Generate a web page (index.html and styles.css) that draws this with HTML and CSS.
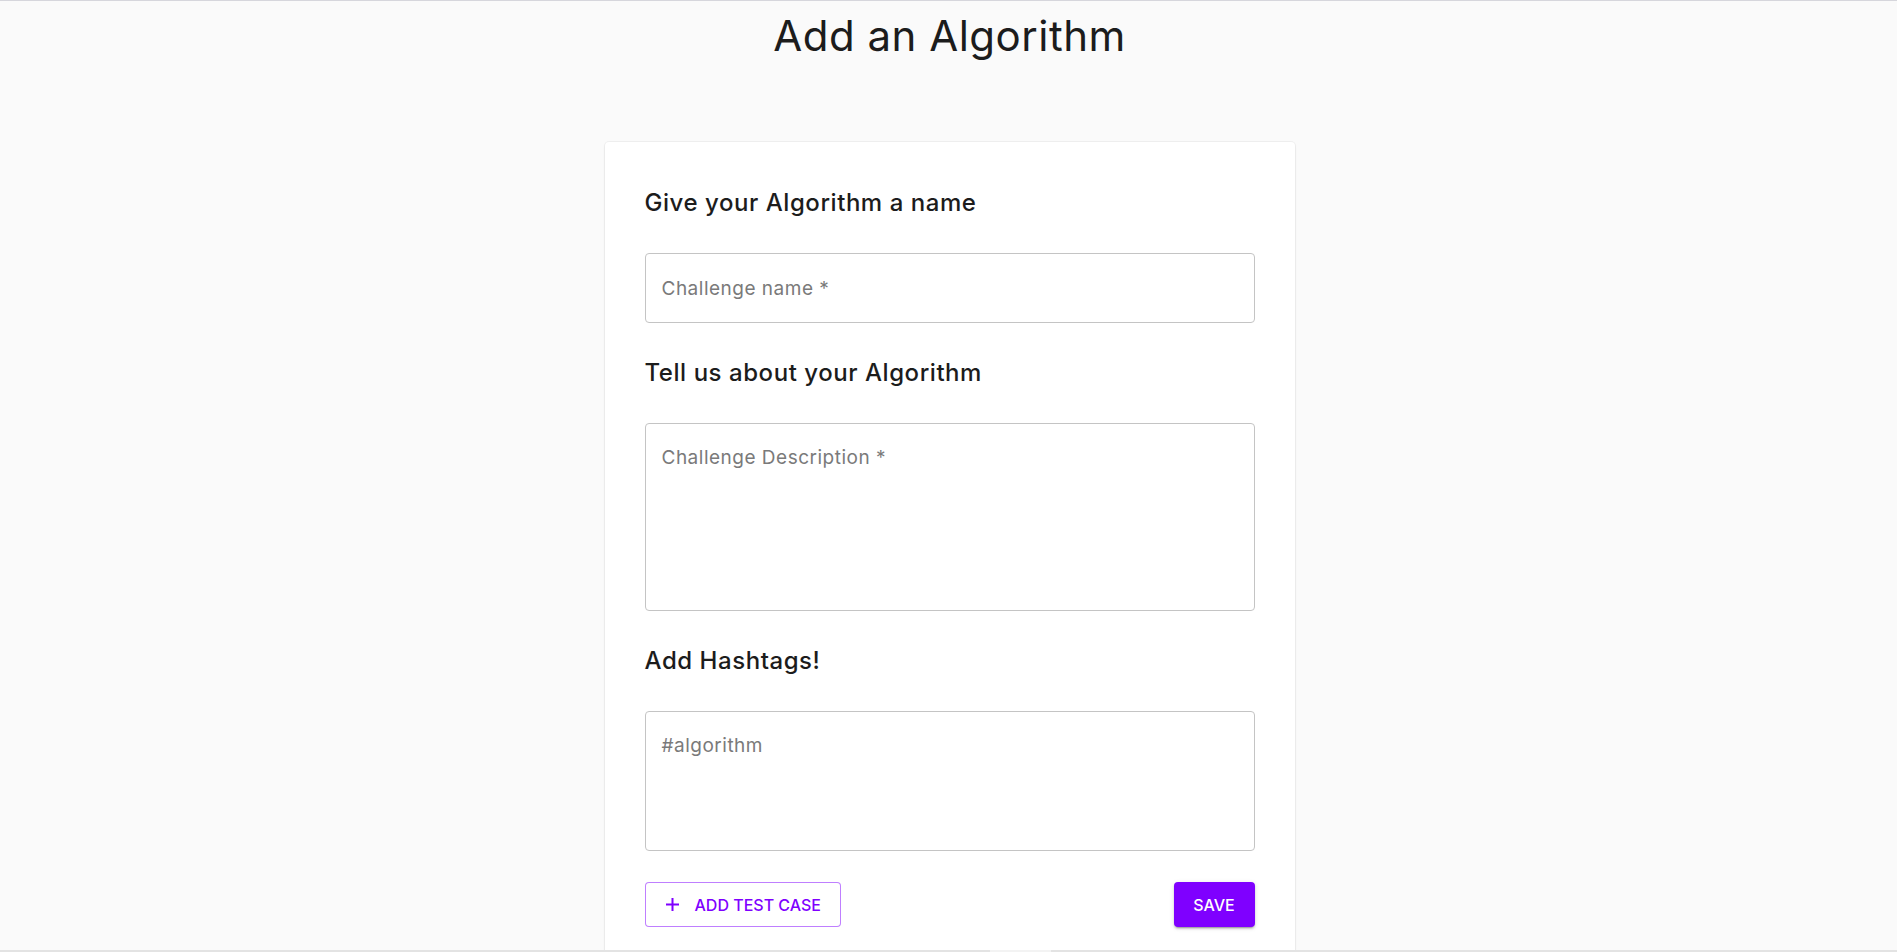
FILE: index.html
```html
<!DOCTYPE html>
<html lang="en">
<head>
<meta charset="utf-8">
<title>Add an Algorithm</title>
<link rel="stylesheet" href="styles.css">
</head>
<body>
<div class="page">
  <h1 class="title">Add an Algorithm</h1>
  <main class="card">
    <h2 class="heading">Give your Algorithm a name</h2>
    <div class="field field-single"><span class="label">Challenge name *</span></div>
    <h2 class="heading">Tell us about your Algorithm</h2>
    <div class="field field-desc"><span class="label">Challenge Description *</span></div>
    <h2 class="heading">Add Hashtags!</h2>
    <div class="field field-tags"><span class="label">#algorithm</span></div>
    <div class="actions">
      <button class="btn btn-outlined" type="button">
        <svg class="plus" width="15" height="15" viewBox="0 0 15 15" aria-hidden="true"><path d="M7.5 1v13M1 7.5h13" stroke="currentColor" stroke-width="2" fill="none"/></svg>
        <span>ADD TEST CASE</span>
      </button>
      <button class="btn btn-contained" type="button">SAVE</button>
    </div>
  </main>
</div>
<div class="hscroll"><div class="hscroll-thumb"></div></div>
</body>
</html>
```

FILE: styles.css
```css
html, body {
  margin: 0;
  padding: 0;
  height: 100%;
  overflow: hidden;
}
body {
  background: #fafafa;
  font-family: Inter, "Noto Sans", sans-serif;
  color: #1c1c1c;
  border-top: 1px solid #d6d6dc;
  box-sizing: border-box;
}
.page {
  display: flex;
  flex-direction: column;
  align-items: center;
  padding-left: 2px;
}
.title {
  margin: 10px 0 0;
  font-size: 42px;
  line-height: 50px;
  font-weight: 400;
  letter-spacing: 0.5px;
  color: #1c1c1c;
}
.card {
  margin-top: 81px;
  width: 690px;
  box-sizing: border-box;
  padding: 45px 40px 40px;
  background: #fff;
  border-radius: 4px;
  box-shadow: 0 0 0 1px rgba(0,0,0,0.04), 0 1px 3px rgba(0,0,0,0.06);
  display: flex;
  flex-direction: column;
  gap: 34px;
}
.heading {
  margin: 0;
  font-size: 24px;
  line-height: 32px;
  font-weight: 500;
  letter-spacing: 0.55px;
  color: #1c1c1c;
}
.field {
  border: 1px solid #c4c4c4;
  border-radius: 4px;
  box-sizing: border-box;
  padding: 0 16px;
  display: flex;
  font-size: 19px;
  line-height: 27px;
  letter-spacing: 0.5px;
  color: #7a7a7a;
}
.field-single {
  height: 70px;
  align-items: center;
}
.field-desc {
  height: 188px;
  align-items: flex-start;
  padding-top: 20px;
}
.field-tags {
  height: 140px;
  align-items: flex-start;
  padding-top: 20px;
}
.actions {
  display: flex;
  justify-content: space-between;
  align-items: center;
  margin-top: -3px;
}
.btn {
  font-family: Inter, "Noto Sans", sans-serif;
  font-size: 16px;
  font-weight: 500;
  letter-spacing: 0;
  height: 45px;
  border-radius: 4px;
  display: inline-flex;
  align-items: center;
  box-sizing: border-box;
  cursor: pointer;
}
.btn-outlined {
  width: 196px;
  padding: 0 0 0 19px;
  background: #fff;
  color: #7f00ff;
  border: 1px solid rgba(127, 0, 255, 0.5);
  gap: 15px;
}
.plus {
  display: block;
  flex: none;
}
.btn-contained {
  width: 81px;
  justify-content: center;
  padding: 0;
  background: #7f00ff;
  color: #fff;
  border: none;
  box-shadow: 0 3px 1px -2px rgba(0,0,0,.2), 0 2px 2px 0 rgba(0,0,0,.14), 0 1px 5px 0 rgba(0,0,0,.12);
}
.hscroll {
  position: fixed;
  left: 0;
  right: 0;
  bottom: 0;
  height: 2px;
  background: #e3e3e3;
}
.hscroll-thumb {
  position: absolute;
  left: 990px;
  width: 61px;
  top: 0;
  bottom: 0;
  background: #f3f3f3;
}
```
